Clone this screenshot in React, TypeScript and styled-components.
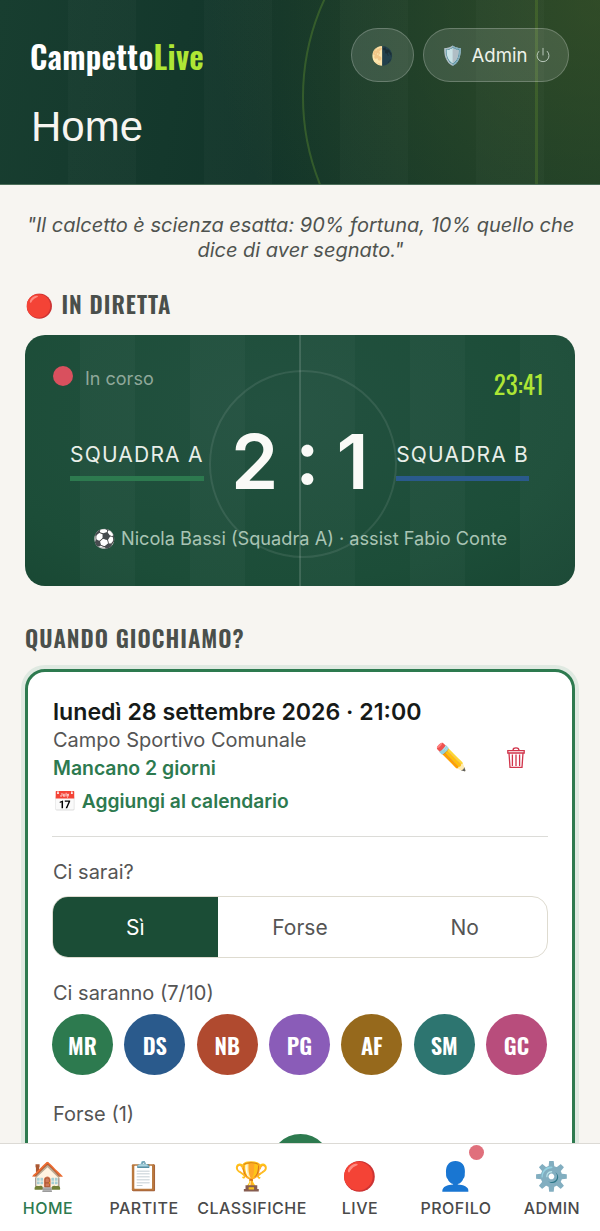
import React from "react";
import styled, { createGlobalStyle } from "styled-components";
import { Power } from "lucide-react";

const SANS = `Inter, "Noto Sans", sans-serif`;
const CONDENSED = `Oswald, "Liberation Sans Narrow", "Roboto Condensed", Roboto, sans-serif`;
const EMOJI = `"Noto Color Emoji", sans-serif`;

const going = [
  { initials: "MR", color: "#2d7a4f" },
  { initials: "DS", color: "#2a5a8c" },
  { initials: "NB", color: "#b04a2f" },
  { initials: "PG", color: "#8a5cb8" },
  { initials: "AF", color: "#96691c" },
  { initials: "SM", color: "#2d7570" },
  { initials: "GC", color: "#b84d7c" },
];

const navItems = [
  { icon: "🏠", label: "HOME", active: true },
  { icon: "📋", label: "PARTITE" },
  { icon: "🏆", label: "CLASSIFICHE" },
  { icon: "🔴", label: "LIVE" },
  { icon: "👤", label: "PROFILO", badge: true },
  { icon: "⚙️", label: "ADMIN" },
];

function TrashIcon(): JSX.Element {
  return (
    <svg width="18" height="21" viewBox="0 0 18 21" fill="none" stroke="#d1344b" strokeWidth="1.3">
      <path d="M6 3.5C6 1.4 7.2 0.8 9 0.8S12 1.4 12 3.5" />
      <path d="M0.8 3.6H17.2V6H0.8Z" />
      <path d="M2 6L3 20.3H15L16 6" />
      <path d="M5.4 7.5V19M9 7.5V19M12.6 7.5V19" />
    </svg>
  );
}

function App(): JSX.Element {
  return (
    <React.Fragment>
      <GlobalStyle />
      <Header>
        <HeaderArc />
        <HeaderLine />
        <TopRow>
          <Logo>
            Campetto<LogoAccent>Live</LogoAccent>
          </Logo>
          <HeaderActions>
            <ThemeButton>🌗</ThemeButton>
            <AdminPill>
              <span>🛡️</span>
              <AdminName>Admin</AdminName>
              <Power size={16} strokeWidth={1.5} color="#b9c9bb" />
            </AdminPill>
          </HeaderActions>
        </TopRow>
        <PageTitle>Home</PageTitle>
      </Header>

      <Main>
        <Quote>
          "Il calcetto è scienza esatta: 90% fortuna, 10% quello che dice di
          aver segnato."
        </Quote>

        <SectionTitle>
          <SectionEmoji>🔴</SectionEmoji> IN DIRETTA
        </SectionTitle>

        <LiveCard>
          <CenterLine />
          <CenterCircle />
          <LiveTop>
            <LiveStatus>
              <LiveDot />
              In corso
            </LiveStatus>
            <Clock>23:41</Clock>
          </LiveTop>
          <ScoreRow>
            <TeamName $bar="#2d7a4f">SQUADRA A</TeamName>
            <Score>
              <span>2</span>
              <ScoreColon>:</ScoreColon>
              <span>1</span>
            </Score>
            <TeamName $bar="#2a5a8c">SQUADRA B</TeamName>
          </ScoreRow>
          <LastEvent>⚽ Nicola Bassi (Squadra A) · assist Fabio Conte</LastEvent>
        </LiveCard>

        <NextTitle>QUANDO GIOCHIAMO?</NextTitle>

        <MatchCard>
          <MatchHead>
            <MatchInfo>
              <MatchDate>lunedì 28 settembre 2026 · 21:00</MatchDate>
              <MatchPlace>Campo Sportivo Comunale</MatchPlace>
              <Countdown>Mancano 2 giorni</Countdown>
              <CalendarLink>📅 Aggiungi al calendario</CalendarLink>
            </MatchInfo>
            <MatchTools>
              <ToolButton>✏️</ToolButton>
              <ToolButton>
                <TrashIcon />
              </ToolButton>
            </MatchTools>
          </MatchHead>

          <Divider />

          <FieldLabel>Ci sarai?</FieldLabel>
          <Choice>
            <ChoiceOption $selected>Sì</ChoiceOption>
            <ChoiceOption>Forse</ChoiceOption>
            <ChoiceOption>No</ChoiceOption>
          </Choice>

          <FieldLabel>Ci saranno (7/10)</FieldLabel>
          <Avatars>
            {going.map((player) => (
              <Avatar key={player.initials} $color={player.color}>
                {player.initials}
              </Avatar>
            ))}
          </Avatars>

          <MaybeLabel>Forse (1)</MaybeLabel>
          <MaybeRow>
            <Avatar $color="#2d7a4f">LT</Avatar>
          </MaybeRow>
        </MatchCard>
      </Main>

      <BottomNav>
        {navItems.map((item) => (
          <NavItem key={item.label} $active={item.active}>
            <NavIcon>
              {item.icon}
              {item.badge && <NavBadge />}
            </NavIcon>
            {item.label}
          </NavItem>
        ))}
      </BottomNav>
    </React.Fragment>
  );
}

export default App;

const GlobalStyle = createGlobalStyle`
  html, body {
    margin: 0;
    height: 1231px;
    overflow: hidden;
    background: #f7f5f1;
    font-family: ${SANS};
  }
  * {
    box-sizing: border-box;
  }
`;

const Header = styled.header`
  position: relative;
  height: 185px;
  padding: 28px 31px 0;
  overflow: hidden;
  color: #fff;
  background:
    repeating-linear-gradient(90deg, rgba(255,255,255,0) 0 68px, rgba(255,255,255,0.02) 68px 136px),
    radial-gradient(circle at 100% 0%, rgba(70,90,40,0.55) 0%, rgba(70,90,40,0) 62%),
    linear-gradient(100deg, #183e30 0%, #12352a 45%, #173a27 100%);
  border-bottom: 1px solid #4d6f5b;
`;

const HeaderArc = styled.div`
  position: absolute;
  left: 302px;
  top: -137px;
  width: 468px;
  height: 468px;
  border: 2px solid rgba(163, 230, 53, 0.2);
  border-radius: 50%;
`;

const HeaderLine = styled.div`
  position: absolute;
  left: 535px;
  top: 0;
  bottom: 0;
  width: 3px;
  background: rgba(163, 230, 53, 0.14);
`;

const TopRow = styled.div`
  position: relative;
  display: flex;
  justify-content: space-between;
  align-items: flex-start;
`;

const Logo = styled.div`
  margin: 10px 0 0 -1px;
  font-family: ${CONDENSED};
  font-size: 31.5px;
  line-height: 36px;
  font-weight: 600;
  letter-spacing: 0.3px;
`;

const LogoAccent = styled.span`
  color: #aee635;
`;

const HeaderActions = styled.div`
  display: flex;
  gap: 9px;
`;

const ThemeButton = styled.div`
  width: 63px;
  height: 54px;
  display: flex;
  align-items: center;
  justify-content: center;
  font-family: ${EMOJI};
  font-size: 18px;
  background: rgba(255, 255, 255, 0.12);
  border: 1px solid rgba(255, 255, 255, 0.22);
  border-radius: 27px;
`;

const AdminPill = styled.div`
  width: 146px;
  height: 54px;
  display: flex;
  align-items: center;
  justify-content: center;
  gap: 7.5px;
  font-size: 18.6px;
  font-family: ${SANS};
  background: rgba(255, 255, 255, 0.12);
  border: 1px solid rgba(255, 255, 255, 0.22);
  border-radius: 27px;
`;

const AdminName = styled.span`
  color: #eef2ea;
`;

const PageTitle = styled.h1`
  position: relative;
  margin: 22px 0 0;
  font-family: "Liberation Sans", Arial, sans-serif;
  font-size: 42px;
  line-height: 46px;
  font-weight: 400;
  color: #f7f5f1;
`;

const Main = styled.main`
  padding: 28px 25px 0;
`;

const Quote = styled.p`
  margin: 0 0 0 1px;
  text-align: center;
  font-style: italic;
  font-size: 20px;
  line-height: 25px;
  color: #4f534f;
`;

const SectionTitle = styled.h2`
  margin: 26px 0 13px;
  font-family: ${CONDENSED};
  font-size: 23px;
  line-height: 30px;
  font-weight: 600;
  letter-spacing: 1px;
  color: #4a4f4b;
`;

const SectionEmoji = styled.span`
  font-family: ${EMOJI};
`;

const NextTitle = styled(SectionTitle)`
  margin: 37px 0 16px;
`;

const LiveCard = styled.section`
  position: relative;
  height: 251px;
  padding: 31px 28px 0;
  overflow: hidden;
  border-radius: 20px;
  background:
    repeating-linear-gradient(90deg, rgba(255,255,255,0) 0 55px, rgba(255,255,255,0.025) 55px 110px),
    radial-gradient(ellipse at 45% 30%, #235140 0%, #1c4d38 70%, #184632 100%);
`;

const CenterLine = styled.div`
  position: absolute;
  left: 274px;
  top: 0;
  bottom: 0;
  width: 2px;
  background: rgba(255, 255, 255, 0.14);
`;

const CenterCircle = styled.div`
  position: absolute;
  left: 184px;
  top: 35px;
  width: 188px;
  height: 188px;
  border: 2px solid rgba(255, 255, 255, 0.09);
  border-radius: 50%;
`;

const LiveTop = styled.div`
  position: relative;
  display: flex;
  justify-content: space-between;
  padding-right: 3px;
`;

const LiveStatus = styled.div`
  display: flex;
  align-items: center;
  gap: 12px;
  height: 24px;
  font-size: 18px;
  color: #8fa89a;
`;

const LiveDot = styled.span`
  width: 20px;
  height: 20px;
  margin-bottom: 5px;
  border-radius: 50%;
  background: #d9505e;
`;

const Clock = styled.div`
  margin-top: 3px;
  font-family: ${CONDENSED};
  font-size: 25px;
  line-height: 30px;
  color: #aee635;
`;

const ScoreRow = styled.div`
  position: relative;
  margin: 15px 18px 0 17px;
  display: flex;
  align-items: center;
  justify-content: space-between;
`;

const TeamName = styled.div<{ $bar: string }>`
  margin-bottom: 2px;
  font-size: 21px;
  line-height: 30px;
  letter-spacing: 1.2px;
  color: #e9eee9;
  padding-bottom: 6px;
  border-bottom: 5px solid ${(p) => p.$bar};
  white-space: nowrap;
`;

const Score = styled.div`
  display: flex;
  align-items: center;
  gap: 17px;
  font-size: 76px;
  line-height: 84px;
  font-weight: 600;
  color: #fafaf7;
`;

const ScoreColon = styled.span`
  margin-bottom: 10px;
`;

const LastEvent = styled.div`
  position: relative;
  margin-top: 17px;
  text-align: center;
  font-size: 18.2px;
  line-height: 26px;
  color: #a9c4b4;
`;

const MatchCard = styled.section`
  padding: 26px 24px;
  background: #fff;
  border: 3px solid #2d7a4f;
  border-radius: 20px;
  box-shadow: 0 0 0 4px #dfe9e1;
`;

const MatchHead = styled.div`
  display: flex;
  justify-content: space-between;
  align-items: center;
  padding-bottom: 20px;
`;

const MatchInfo = styled.div`
  padding: 1px 0 0 1px;
`;

const MatchDate = styled.div`
  font-size: 23.15px;
  line-height: 27px;
  font-weight: 600;
  color: #161a18;
`;

const MatchPlace = styled.div`
  font-size: 20px;
  line-height: 28px;
  color: #555;
`;

const Countdown = styled.div`
  margin-top: -1px;
  font-size: 19.4px;
  line-height: 30px;
  font-weight: 600;
  color: #2d7a4f;
`;

const CalendarLink = styled.div`
  margin-top: 3px;
  font-size: 19.2px;
  line-height: 30px;
  font-weight: 600;
  color: #2d7a4f;
`;

const MatchTools = styled.div`
  display: flex;
  align-items: center;
  gap: 28px;
  margin-right: 14px;
`;

const ToolButton = styled.div`
  width: 36px;
  display: flex;
  justify-content: center;
  font-family: ${EMOJI};
  font-size: 26px;
`;

const Divider = styled.hr`
  margin: 0 0 21px;
  border: 0;
  border-top: 1px solid #dcdcd8;
`;

const FieldLabel = styled.div`
  padding: 1px 0 0 1px;
  font-size: 20px;
  line-height: 26px;
  color: #555;
`;

const MaybeLabel = styled(FieldLabel)`
  margin-top: 25px;
`;

const Choice = styled.div`
  display: grid;
  grid-template-columns: repeat(3, 1fr);
  height: 62px;
  margin: 11px 0 21px;
  overflow: hidden;
  background: #fff;
  border: 1.5px solid #dedbd0;
  border-radius: 16px;
`;

const ChoiceOption = styled.div<{ $selected?: boolean }>`
  display: flex;
  align-items: center;
  justify-content: center;
  padding-top: 1px;
  font-size: 21px;
  color: ${(p) => (p.$selected ? "#fff" : "#555")};
  background: ${(p) => (p.$selected ? "#1b4d36" : "transparent")};
`;

const Avatars = styled.div`
  display: flex;
  justify-content: space-between;
  margin-top: 8px;
  padding-right: 1px;
`;

const Avatar = styled.div<{ $color: string }>`
  width: 61px;
  height: 61px;
  display: flex;
  align-items: center;
  justify-content: center;
  border-radius: 50%;
  background: ${(p) => p.$color};
  color: #fff;
  font-family: ${CONDENSED};
  font-size: 22.5px;
  font-weight: 600;
`;

const MaybeRow = styled.div`
  display: flex;
  justify-content: center;
  margin-top: 7px;
`;

const BottomNav = styled.nav`
  position: fixed;
  left: 0;
  right: 0;
  bottom: 0;
  height: 88px;
  display: flex;
  overflow: hidden;
  padding-top: 15px;
  background: #fff;
  border-top: 1px solid #dcdad5;
`;

const NavItem = styled.div<{ $active?: boolean }>`
  flex: 1 0 auto;
  min-width: 96px;
  padding: 0 5px;
  display: flex;
  flex-direction: column;
  align-items: center;
  gap: 3px;
  font-size: 16px;
  line-height: 20px;
  font-weight: 500;
  letter-spacing: 0.5px;
  color: ${(p) => (p.$active ? "#2d7a4f" : "#4a4a4a")};
`;

const NavIcon = styled.div`
  position: relative;
  font-family: ${EMOJI};
  font-size: 28px;
  line-height: 36px;
`;

const NavBadge = styled.span`
  position: absolute;
  top: -14px;
  right: -10px;
  width: 15px;
  height: 15px;
  border-radius: 50%;
  background: #e0707c;
`;
